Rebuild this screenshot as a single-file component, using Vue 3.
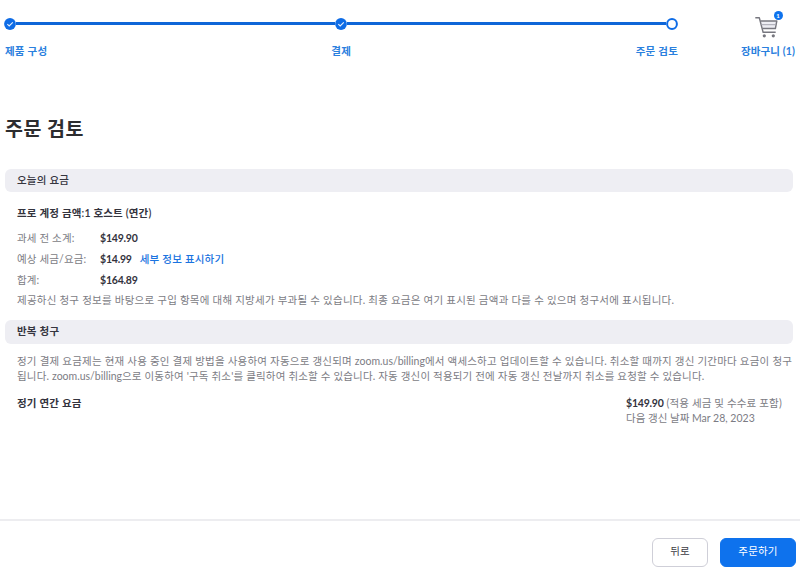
<template>
  <div class="page">
    <header class="top">
      <nav class="steps">
        <div v-for="s in steps" :key="s.label" class="step" :class="s.align">
          <div class="track">
            <span v-if="s.align !== 'start'" class="line"></span>
            <svg v-if="s.done" class="dot" viewBox="0 0 12 12">
              <circle cx="6" cy="6" r="5.9" fill="#0e6ce6" />
              <path d="M3.3 6.2 5.2 8 8.8 4.3" fill="none" stroke="#e4effd" stroke-width="1.1" />
            </svg>
            <svg v-else class="dot" viewBox="0 0 12 12">
              <circle cx="6" cy="6" r="4.9" fill="#fff" stroke="#0e6ce6" stroke-width="2" />
            </svg>
          </div>
          <span class="step-label">{{ s.label }}</span>
        </div>
      </nav>
      <a class="cart">
        <span class="cart-icon">
          <svg viewBox="0 0 24 22" width="24" height="22">
            <path d="M6 5h15.5l-1.2 7.5H7.7z" fill="#ededf3" />
            <g fill="none" stroke="#77777f" stroke-width="1.4" stroke-linejoin="round">
              <path d="M.3 1.8h4l3.8 14.4h12.6" />
              <path d="M5.4 5h16.4l-1.4 7.5H7.4" />
            </g>
            <path d="M6.4 8.7h14.4" stroke="#a5a5b0" stroke-width="1" />
            <circle cx="9.3" cy="19.8" r="1.6" fill="#77777f" />
            <circle cx="18.3" cy="19.8" r="1.6" fill="#77777f" />
          </svg>
          <span class="badge">1</span>
        </span>
        <span class="cart-label">장바구니 (1)</span>
      </a>
    </header>

    <main class="content">
      <h1>주문 검토</h1>

      <h2 class="bar">오늘의 요금</h2>
      <section class="today">
        <h3>프로 계정 금액:1 호스트 (연간)</h3>
        <div v-for="r in rows" :key="r.label" class="row">
          <span class="name">{{ r.label }}</span>
          <b>{{ r.value }}</b>
          <a v-if="r.link">{{ r.link }}</a>
        </div>
        <p class="note">제공하신 청구 정보를 바탕으로 구입 항목에 대해 지방세가 부과될 수 있습니다. 최종 요금은 여기 표시된 금액과 다를 수 있으며 청구서에 표시됩니다.</p>
      </section>

      <h2 class="bar second">반복 청구</h2>
      <section class="recurring">
        <p class="terms">정기 결제 요금제는 현재 사용 중인 결제 방법을 사용하여 자동으로 갱신되며 <span class="url">zoom.us/billing</span>에서 액세스하고 업데이트할 수 있습니다. 취소할 때까지 갱신 기간마다 요금이 청구</p>
        <p class="terms rest">됩니다. <span class="url">zoom.us/billing</span>으로 이동하여 '구독 취소'를 클릭하여 취소할 수 있습니다. 자동 갱신이 적용되기 전에 자동 갱신 전날까지 취소를 요청할 수 있습니다.</p>
        <div class="plan">
          <h3>정기 연간 요금</h3>
          <div class="renew">
            <div><b>$149.90</b> (적용 세금 및 수수료 포함)</div>
            <div class="date">다음 갱신 날짜 Mar 28, 2023</div>
          </div>
        </div>
      </section>
    </main>

    <footer class="actions">
      <button class="btn">뒤로</button>
      <button class="btn primary">주문하기</button>
    </footer>
  </div>
</template>

<script setup>
const steps = [
  { label: '제품 구성', align: 'start', done: true },
  { label: '결제', align: 'middle', done: true },
  { label: '주문 검토', align: 'end', done: false }
]

const rows = [
  { label: '과세 전 소계:', value: '$149.90' },
  { label: '예상 세금/요금:', value: '$14.99', link: '세부 정보 표시하기' },
  { label: '합계:', value: '$164.89' }
]
</script>

<style>
body {
  margin: 0;
  background: #fff;
}
</style>

<style scoped>
.page {
  display: flex;
  flex-direction: column;
  box-sizing: border-box;
  height: 582px;
  overflow: hidden;
  font-family: Lato, "Noto Sans CJK KR", sans-serif;
  font-size: 10.5px;
  line-height: 15px;
  color: #7c7c84;
  white-space: nowrap;
}

h1,
h2,
h3,
p {
  margin: 0;
  font-size: inherit;
}

.top {
  display: flex;
  justify-content: space-between;
  height: 110px;
  padding: 0 4px;
}

.steps {
  display: flex;
  width: 674px;
}

.step {
  display: flex;
  flex-direction: column;
  padding-top: 17px;
}

.step.start {
  width: 12px;
}

.step.middle,
.step.end {
  width: 331px;
  align-items: flex-end;
}

.track {
  display: flex;
  align-items: center;
  width: 100%;
  height: 13px;
}

.line {
  flex: 1;
  height: 3px;
  background: #0e66d8;
}

.dot {
  flex: none;
  width: 12px;
  height: 12px;
}

.step-label,
.cart-label {
  margin-top: 14px;
  font-weight: 600;
  color: #2a80de;
  letter-spacing: 0.2px;
}

.start .step-label {
  margin-left: 1px;
}

.middle .step-label {
  margin-right: -4px;
}

.cart {
  display: flex;
  flex-direction: column;
  align-items: center;
  width: 56px;
}

.cart-icon {
  position: relative;
  height: 44px;
}

.cart-icon svg {
  margin: 16px 3px 0 0;
}

.cart .cart-label {
  margin-top: 0;
  font-weight: 700;
  letter-spacing: 0.1px;
}

.badge {
  position: absolute;
  top: 11px;
  right: -1px;
  width: 9px;
  height: 9px;
  border-radius: 50%;
  background: #0e72ed;
  color: #fff;
  font-size: 6px;
  font-weight: 700;
  line-height: 9px;
  text-align: center;
}

.content {
  flex: 1;
  padding: 0 7px 0 5px;
}

h1 {
  height: 59px;
  font-size: 19.5px;
  line-height: 37px;
  font-weight: 700;
  letter-spacing: 0.5px;
  color: #2d2d2f;
}

.bar {
  height: 23px;
  padding-left: 12px;
  border-radius: 6px;
  background: #eeeef3;
  color: #35353f;
  font-weight: 500;
  line-height: 22px;
  letter-spacing: 0.2px;
}

.bar.second {
  height: 24px;
  font-weight: 600;
}

h3,
b {
  color: #33333d;
  font-weight: 600;
}

h3 {
  letter-spacing: 0.17px;
}

b {
  font-weight: 700;
  letter-spacing: -0.2px;
}

.today {
  height: 128px;
  padding-left: 12px;
}

.today h3 {
  padding: 14px 0 7px;
}

.row {
  display: flex;
  height: 21px;
  line-height: 21px;
}

.name {
  width: 83px;
  letter-spacing: 0.15px;
}

.row a {
  margin-left: 8px;
  color: #1a73e0;
  font-weight: 500;
  letter-spacing: 0.2px;
}

.note {
  padding-top: 2px;
  letter-spacing: 0.23px;
}

.recurring {
  padding: 10px 0 0 12px;
}

.terms {
  letter-spacing: 0.21px;
}

.terms.rest {
  letter-spacing: 0.17px;
}

.url {
  letter-spacing: 0;
}

.plan {
  display: flex;
  justify-content: space-between;
  padding-top: 12px;
}

.renew {
  width: 167px;
  letter-spacing: 0.15px;
}

.date {
  letter-spacing: 0;
}

.actions {
  display: flex;
  justify-content: flex-end;
  gap: 12px;
  height: 63px;
  box-sizing: border-box;
  padding: 17px 4px 0;
  border-top: 2px solid #ededf0;
}

.btn {
  box-sizing: border-box;
  width: 56px;
  height: 29px;
  padding: 0 0 2px;
  border: 1px solid #cfcfd8;
  border-radius: 6px;
  background: #fff;
  color: #3c3c44;
  font: inherit;
  letter-spacing: 0.2px;
}

.btn.primary {
  width: 76px;
  border-color: #0e72ed;
  background: #0e72ed;
  color: #fff;
}
</style>
